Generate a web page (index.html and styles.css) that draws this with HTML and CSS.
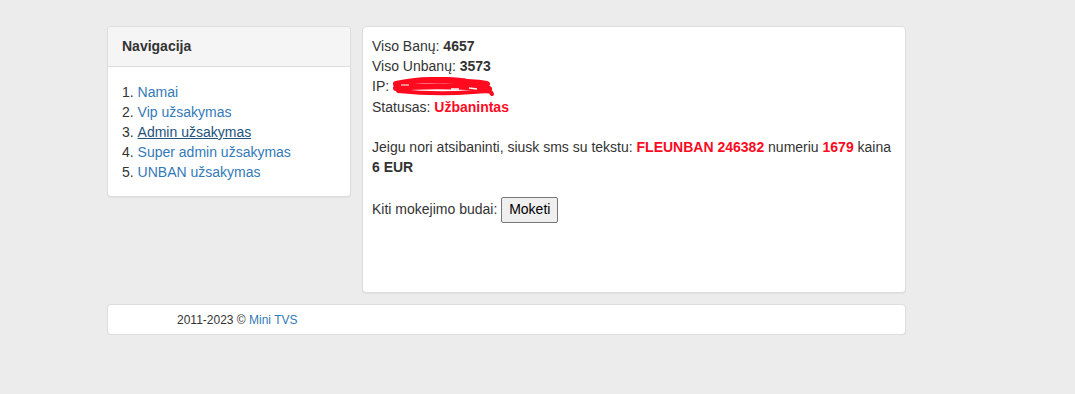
FILE: index.html
```html
<!DOCTYPE html>
<html lang="lt">
<head>
    <meta charset="UTF-8">
    <title>Mini TVS</title>
    <link rel="stylesheet" href="styles.css">
</head>
<body>
    <div class="wrap">
        <div class="row">
            <div class="panel nav">
                <div class="panel-heading">Navigacija</div>
                <div class="panel-body">
                    <ol class="menu">
                        <li><a href="#">Namai</a></li>
                        <li><a href="#">Vip užsakymas</a></li>
                        <li><a href="#" class="active">Admin užsakymas</a></li>
                        <li><a href="#">Super admin užsakymas</a></li>
                        <li><a href="#">UNBAN užsakymas</a></li>
                    </ol>
                </div>
            </div>
            <div class="panel main">
                <div class="panel-body">
                    Viso Banų: <b>4657</b><br>
                    Viso Unbanų: <b>3573</b><br>
                    IP: <svg class="scribble" width="102" height="20" viewBox="0 0 102 20">
                        <path d="M3 7 C20 3, 40 2, 62 4 S88 5, 94 7" stroke="#ff0a1e" stroke-width="6" fill="none" stroke-linecap="round"/>
                        <path d="M3 11 C25 9, 50 9, 75 10 S92 10, 96 12" stroke="#ff0a1e" stroke-width="6" fill="none" stroke-linecap="round"/>
                        <path d="M5 14 C25 16, 55 17, 80 15 S96 16, 99 17" stroke="#ff0a1e" stroke-width="4" fill="none" stroke-linecap="round"/>
                        <path d="M28 3 C45 1, 60 1, 72 3" stroke="#ff0a1e" stroke-width="3" fill="none" stroke-linecap="round"/>
                        <path d="M58 12 L66 12 M76 11 L84 12" stroke="#fff" stroke-width="1.5" fill="none"/>
                        <path d="M8 8 L16 8" stroke="#fff" stroke-width="1" fill="none"/>
                    </svg><br>
                    Statusas: <b class="red">Užbanintas</b><br>
                    <br>
                    Jeigu nori atsibaninti, siusk sms su tekstu: <b class="red">FLEUNBAN 246382</b> numeriu <b class="red">1679</b> kaina <b>6 EUR</b><br>
                    <br>
                    Kiti mokejimo budai: <button class="pay">Moketi</button>
                </div>
            </div>
        </div>
        <div class="panel footer">
            <div class="footer-body">2011-2023 © <a href="#">Mini TVS</a></div>
        </div>
    </div>
</body>
</html>
```

FILE: styles.css
```css
body {
    margin: 0;
    background-color: #ececec;
    font-family: "Liberation Sans", Arial, sans-serif;
    font-size: 14px;
    line-height: 20px;
    color: #333;
}

a {
    color: #337ab7;
    text-decoration: none;
}

.wrap {
    width: 799px;
    margin-left: 107px;
    padding-top: 26px;
}

.row {
    display: flex;
    align-items: flex-start;
    gap: 11px;
}

.panel {
    background-color: #fff;
    border: 1px solid #ddd;
    border-radius: 4px;
    box-shadow: 0 1px 1px rgba(0, 0, 0, 0.05);
    box-sizing: border-box;
}

.nav {
    width: 244px;
}

.panel-heading {
    background-color: #f5f5f5;
    border-bottom: 1px solid #ddd;
    border-radius: 3px 3px 0 0;
    padding: 9px 14px 10px;
    font-weight: bold;
}

.nav .panel-body {
    padding: 15px 14px 14px;
}

.menu {
    margin: 0;
    padding: 0;
    list-style-position: inside;
}

.menu a.active {
    color: #23527c;
    text-decoration: underline;
}

.main {
    width: 544px;
    height: 267px;
}

.main .panel-body {
    padding: 9px 9px;
}

.red {
    color: #ff0a1e;
}

.scribble {
    vertical-align: -6px;
}

.pay {
    font-family: "Liberation Sans", Arial, sans-serif;
    font-size: 14px;
    line-height: 17px;
    color: #000;
    background-color: #efefef;
    border: 1px solid #767676;
    border-radius: 2px;
    padding: 3px 7px 4px;
}

.footer {
    margin-top: 11px;
    height: 31px;
}

.footer-body {
    padding: 5px 0 0 69px;
    font-size: 12px;
    line-height: 20px;
}
```
